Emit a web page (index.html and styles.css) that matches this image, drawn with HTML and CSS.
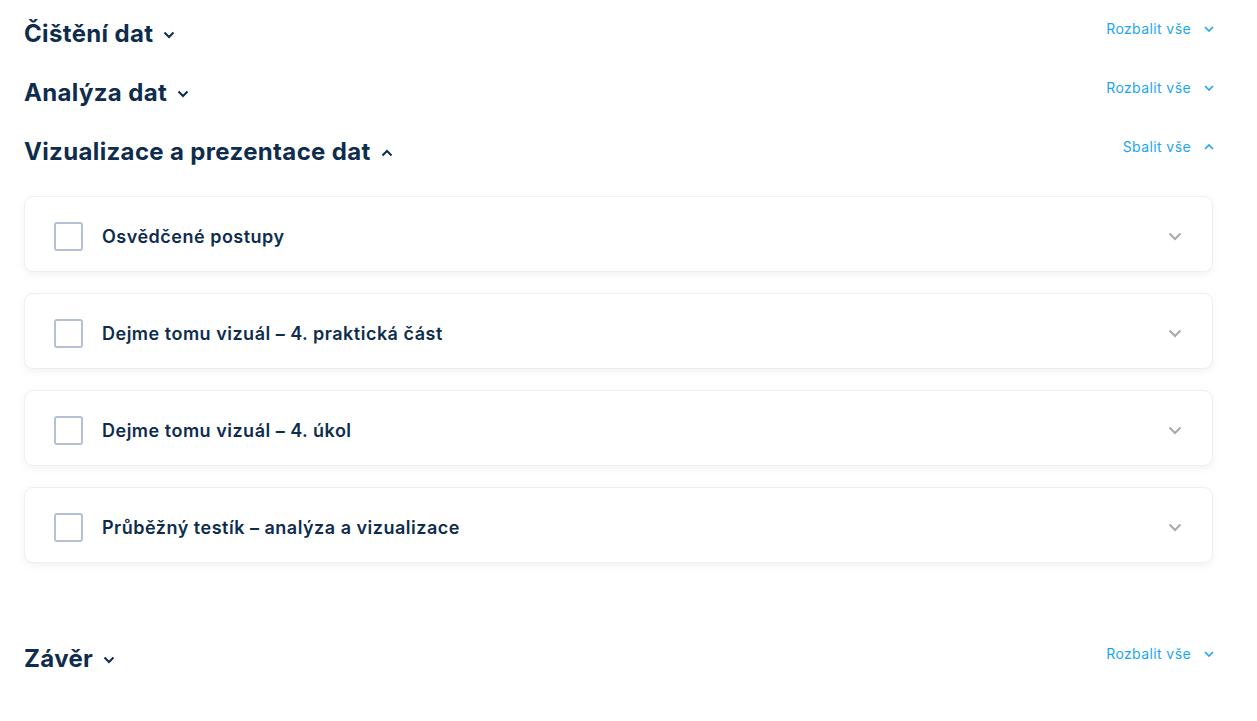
FILE: index.html
```html
<!DOCTYPE html>
<html lang="cs">
<head>
<meta charset="utf-8">
<title>Kurz</title>
<link rel="stylesheet" href="styles.css">
</head>
<body>
<main class="page">
  <section class="section">
    <div class="section-head">
      <h2 class="section-title">Čištění dat <svg class="title-chev" viewBox="0 0 12 8"><path d="M1.5 1.5 6 6l4.5-4.5"/></svg></h2>
      <button class="toggle-all">Rozbalit vše <svg class="toggle-chev" viewBox="0 0 10 6"><path d="M1 1l4 4 4-4"/></svg></button>
    </div>
  </section>
  <section class="section">
    <div class="section-head">
      <h2 class="section-title">Analýza dat <svg class="title-chev" viewBox="0 0 12 8"><path d="M1.5 1.5 6 6l4.5-4.5"/></svg></h2>
      <button class="toggle-all">Rozbalit vše <svg class="toggle-chev" viewBox="0 0 10 6"><path d="M1 1l4 4 4-4"/></svg></button>
    </div>
  </section>
  <section class="section open">
    <div class="section-head">
      <h2 class="section-title">Vizualizace a prezentace dat <svg class="title-chev" viewBox="0 0 12 8"><path d="M1.5 6.5 6 2l4.5 4.5"/></svg></h2>
      <button class="toggle-all">Sbalit vše <svg class="toggle-chev" viewBox="0 0 10 6"><path d="M1 5l4-4 4 4"/></svg></button>
    </div>
    <div class="cards">
      <div class="card"><span class="check"></span><span class="card-title">Osvědčené postupy</span><svg class="card-chev" viewBox="0 0 14 9"><path d="M1.5 1.5 7 7l5.5-5.5"/></svg></div>
      <div class="card"><span class="check"></span><span class="card-title">Dejme tomu vizuál – 4. praktická část</span><svg class="card-chev" viewBox="0 0 14 9"><path d="M1.5 1.5 7 7l5.5-5.5"/></svg></div>
      <div class="card"><span class="check"></span><span class="card-title">Dejme tomu vizuál – 4. úkol</span><svg class="card-chev" viewBox="0 0 14 9"><path d="M1.5 1.5 7 7l5.5-5.5"/></svg></div>
      <div class="card"><span class="check"></span><span class="card-title">Průběžný testík – analýza a vizualizace</span><svg class="card-chev" viewBox="0 0 14 9"><path d="M1.5 1.5 7 7l5.5-5.5"/></svg></div>
    </div>
  </section>
  <section class="section">
    <div class="section-head">
      <h2 class="section-title">Závěr <svg class="title-chev" viewBox="0 0 12 8"><path d="M1.5 1.5 6 6l4.5-4.5"/></svg></h2>
      <button class="toggle-all">Rozbalit vše <svg class="toggle-chev" viewBox="0 0 10 6"><path d="M1 1l4 4 4-4"/></svg></button>
    </div>
  </section>
</main>
</body>
</html>
```

FILE: styles.css
```css
* { box-sizing: border-box; }
html, body { margin: 0; padding: 0; background: #fff; }
body {
  font-family: "Inter", "Noto Sans", sans-serif;
  color: #0e2d4e;
}
.page {
  width: 1189px;
  margin-left: 24px;
  padding-top: 18px;
}
.section-head {
  display: flex;
  align-items: center;
  justify-content: space-between;
  height: 32px;
  margin-bottom: 27px;
}
.section-title {
  margin: 0;
  font-size: 24px;
  font-weight: 700;
  line-height: 32px;
  display: flex;
  align-items: center;
  gap: 10px;
  letter-spacing: 0.35px;
}
.title-chev {
  width: 12px;
  height: 8px;
  fill: none;
  stroke: #0e2d4e;
  stroke-width: 2;
  margin-top: 2px;
}
.toggle-all {
  border: 0;
  background: none;
  padding: 0;
  margin: 2px -1px 0 0;
  align-self: flex-start;
  font-family: inherit;
  font-size: 14px;
  letter-spacing: 0.4px;
  color: #1ca6f1;
  display: flex;
  align-items: center;
  gap: 13px;
  cursor: pointer;
}
.toggle-chev {
  width: 10px;
  height: 6px;
  fill: none;
  stroke: #1ca6f1;
  stroke-width: 1.6;
}
.open .section-head { margin-bottom: 28px; }
.cards {
  display: flex;
  flex-direction: column;
  gap: 21px;
  padding-bottom: 80px;
}
.card {
  height: 76px;
  display: flex;
  align-items: center;
  padding: 4px 30px 0 29px;
  background: #fff;
  border: 1px solid #efefef;
  border-radius: 9px;
  box-shadow: 0 3px 8px rgba(0, 0, 0, 0.05);
}
.check {
  width: 29px;
  height: 29px;
  border: 2px solid #b5c0d3;
  border-radius: 3px;
  flex: none;
}
.card-title {
  margin-left: 19px;
  font-size: 18px;
  font-weight: 600;
  letter-spacing: 0.5px;
  flex: 1;
}
.card-chev {
  width: 14px;
  height: 9px;
  fill: none;
  stroke: #a9a9a9;
  stroke-width: 2;
}
```
